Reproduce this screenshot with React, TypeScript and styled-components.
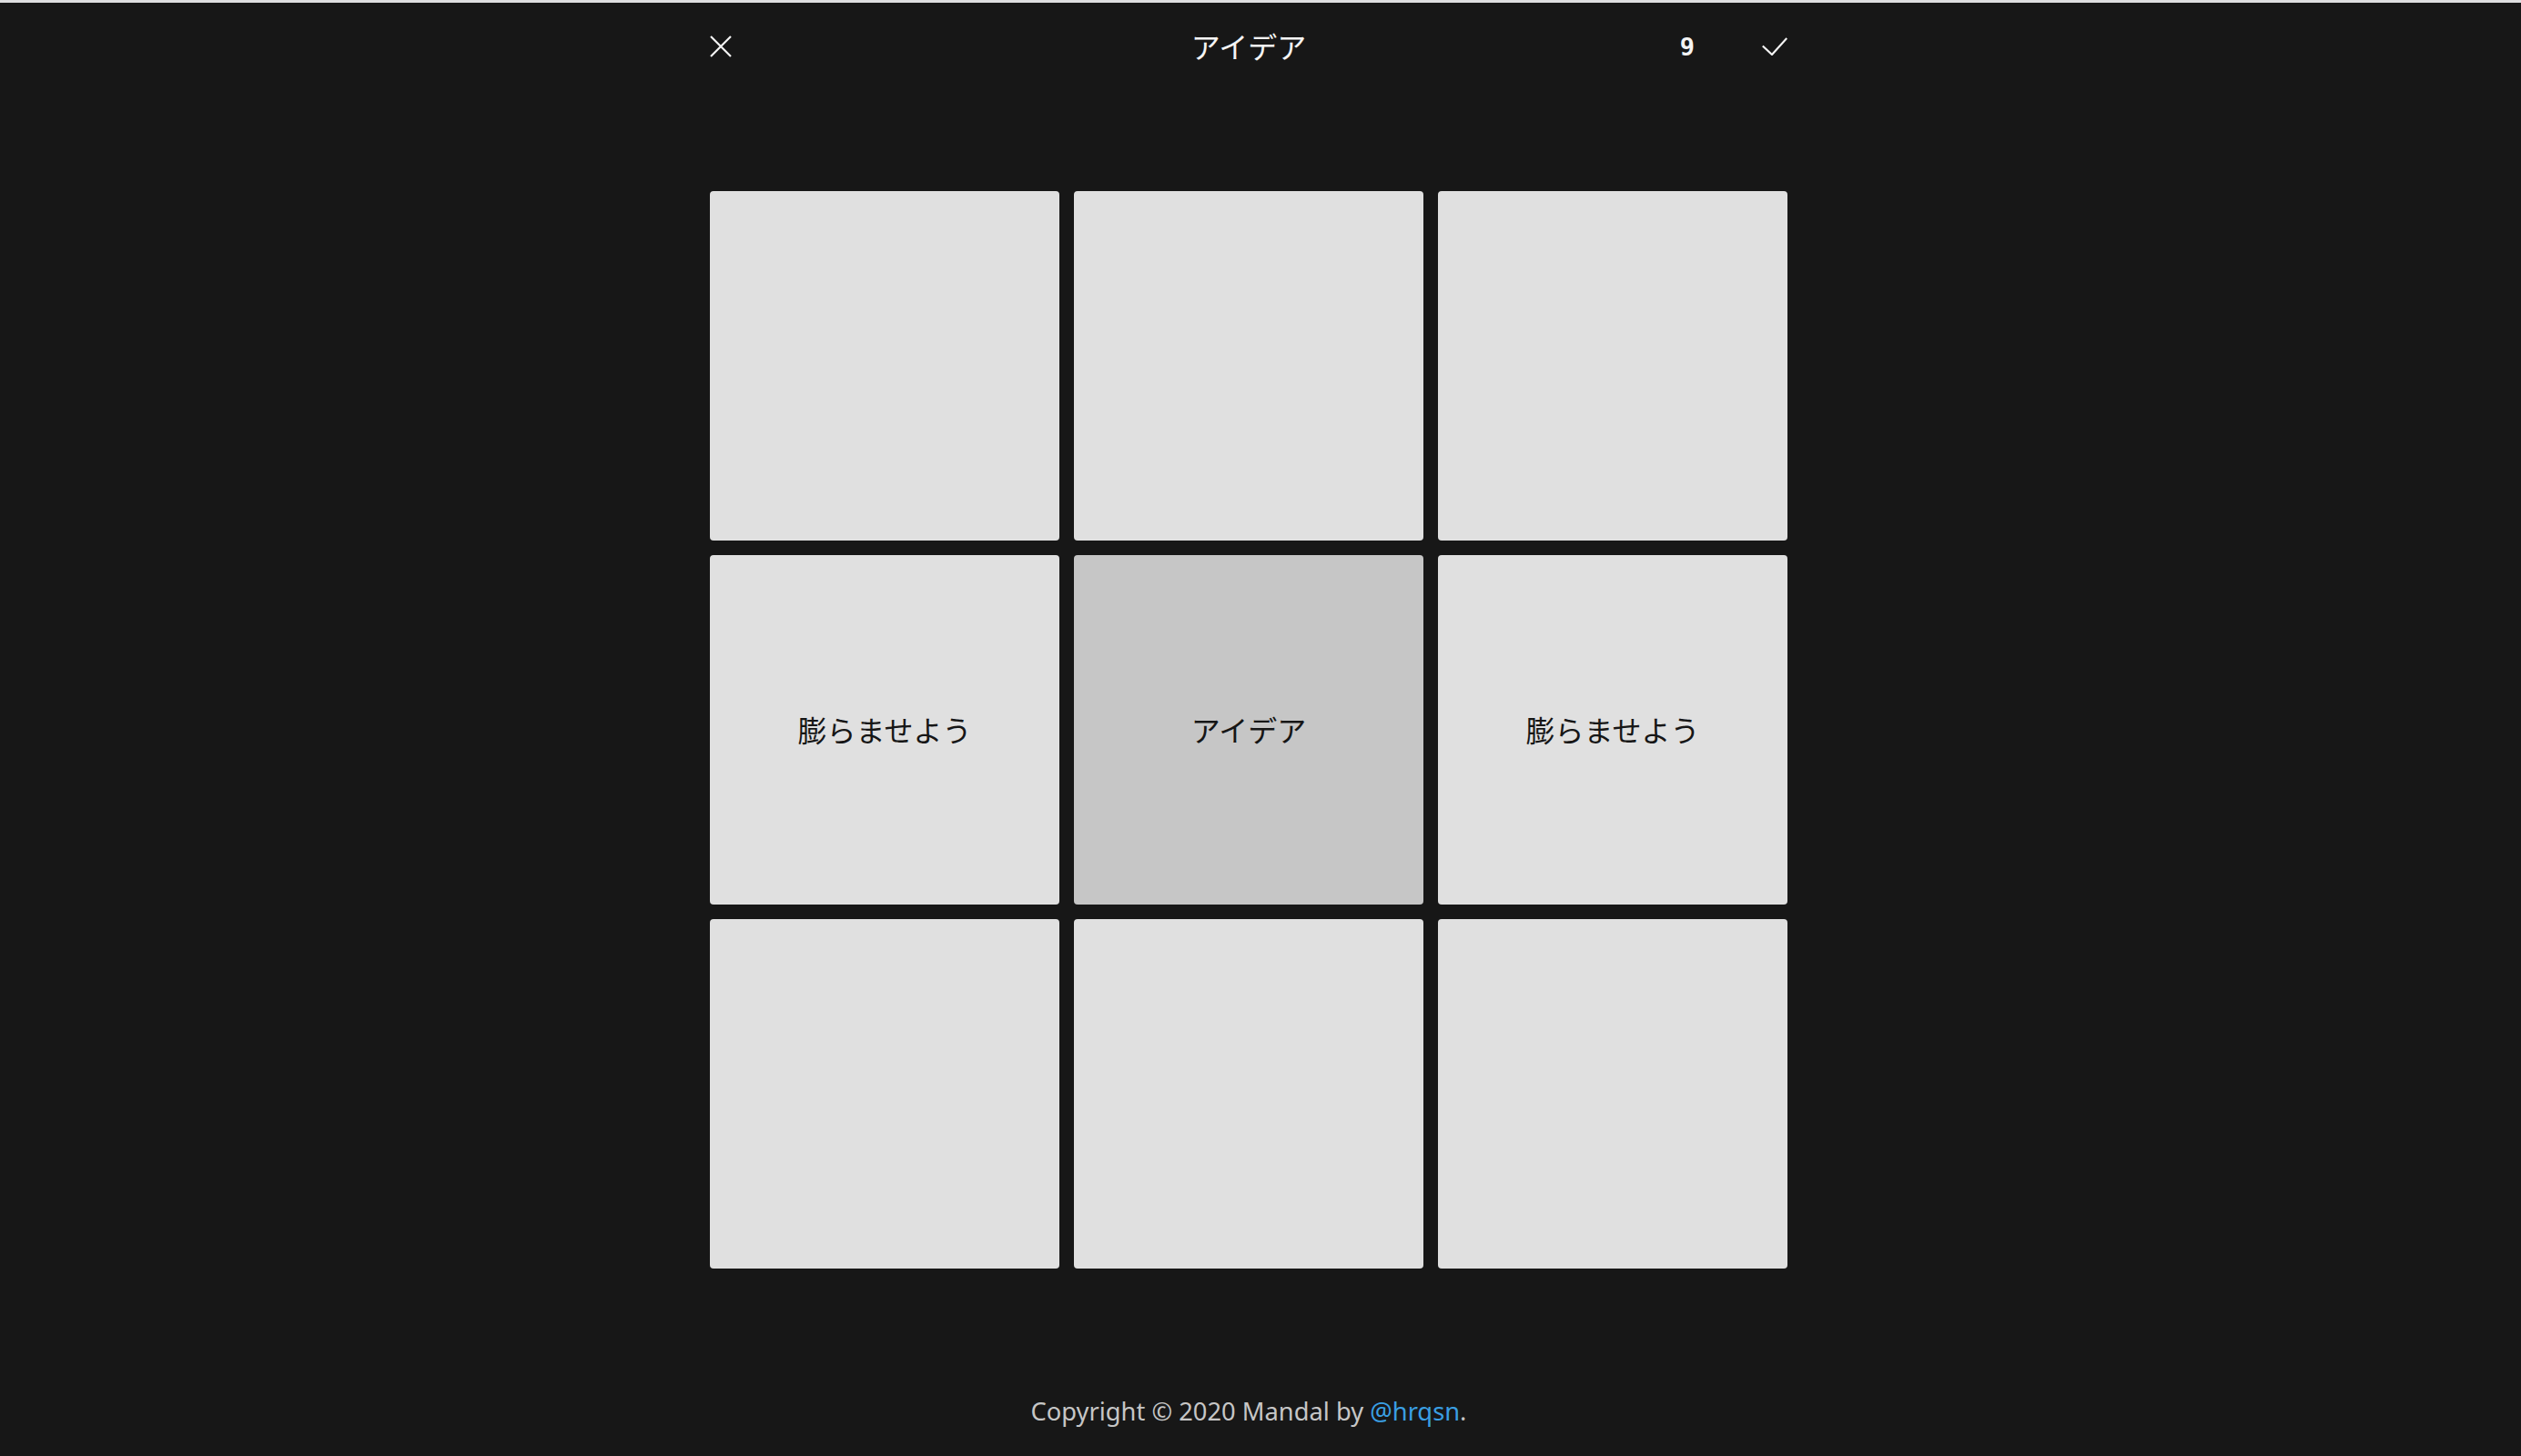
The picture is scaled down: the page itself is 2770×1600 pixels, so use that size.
import styled, { createGlobalStyle } from 'styled-components';

const cells = [
  { id: 1, text: '', center: false },
  { id: 2, text: '', center: false },
  { id: 3, text: '', center: false },
  { id: 4, text: '膨らませよう', center: false },
  { id: 5, text: 'アイデア', center: true },
  { id: 6, text: '膨らませよう', center: false },
  { id: 7, text: '', center: false },
  { id: 8, text: '', center: false },
  { id: 9, text: '', center: false },
];

export default function App() {
  return (
    <>
      <GlobalStyle />
      <Page>
        <Column>
          <Header>
            <IconButton aria-label="close">
              <svg width="24" height="24" viewBox="0 0 24 24" fill="none">
                <path d="M1 1L23 23M23 1L1 23" stroke="#f4f4f4" strokeWidth="2.2" />
              </svg>
            </IconButton>
            <Title>アイデア</Title>
            <RightActions>
              <Count>9</Count>
              <IconButton aria-label="save">
                <svg width="28" height="20" viewBox="0 0 28 20" fill="none">
                  <path d="M0.8 9.5L11 19L27.3 1" stroke="#f4f4f4" strokeWidth="2.2" />
                </svg>
              </IconButton>
            </RightActions>
          </Header>

          <Grid>
            {cells.map((cell) => (
              <Cell key={cell.id} center={cell.center}>
                <CellText>{cell.text}</CellText>
              </Cell>
            ))}
          </Grid>
        </Column>

        <Footer>
          Copyright © 2020 Mandal by <Link href="#">@hrqsn</Link>.
        </Footer>
      </Page>
    </>
  );
}

const GlobalStyle = createGlobalStyle`
  html, body {
    margin: 0;
    padding: 0;
    background: #171717;
  }

  body {
    font-family: "Noto Sans", "Noto Sans CJK JP", sans-serif;
  }
`;

const Page = styled.div`
  min-height: 1597px;
  border-top: 3px solid #dedee0;
  background: #171717;
  padding-right: 26px;
  display: flex;
  flex-direction: column;
  align-items: center;
`;

const Column = styled.div`
  width: 1184px;
  display: flex;
  flex-direction: column;
`;

const Header = styled.header`
  height: 94px;
  display: grid;
  grid-template-columns: 1fr auto 1fr;
  align-items: center;
`;

const IconButton = styled.button`
  background: none;
  border: none;
  padding: 0;
  cursor: pointer;
  display: flex;
  align-items: center;
  justify-content: center;
  justify-self: start;
  margin-top: 2px;
`;

const Title = styled.h1`
  margin: 0;
  font-family: "Noto Sans CJK JP", sans-serif;
  font-size: 32px;
  font-weight: 400;
  color: #f4f4f4;
  line-height: 1;
`;

const RightActions = styled.div`
  justify-self: end;
  display: flex;
  align-items: center;
  gap: 74px;
`;

const Count = styled.span`
  font-family: "DejaVu Sans Mono", monospace;
  font-weight: 700;
  font-size: 27px;
  color: #f4f4f4;
  line-height: 1;
  margin-top: 2px;
`;

const Grid = styled.div`
  margin-top: 113px;
  display: grid;
  grid-template-columns: repeat(3, 384px);
  grid-auto-rows: 384px;
  gap: 16px;
`;

const Cell = styled.div<{ center?: boolean }>`
  background: ${({ center }) => (center ? '#c6c6c6' : '#e0e0e0')};
  border-radius: 4px;
  display: flex;
  align-items: center;
  justify-content: center;
  font-family: "Noto Sans CJK JP", sans-serif;
  font-size: 32px;
  color: #161616;
  cursor: pointer;
`;

const CellText = styled.span`
  line-height: 1;
  margin-top: -3px;
`;

const Footer = styled.footer`
  margin-top: 137px;
  font-family: "Noto Sans", sans-serif;
  font-size: 27.3px;
  line-height: 40px;
  color: #c6c6c6;
`;

const Link = styled.a`
  color: #3a9fe3;
  text-decoration: none;
`;
